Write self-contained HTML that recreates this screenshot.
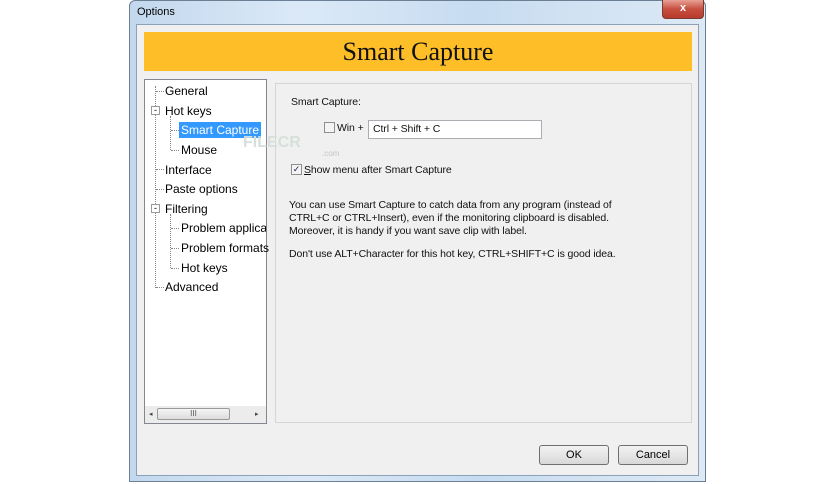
<!DOCTYPE html>
<html><head><style>
body{margin:0;width:836px;height:484px;background:#fff;position:relative;overflow:hidden;font-family:"Liberation Sans",sans-serif;}
.abs{position:absolute}
.win{left:129px;top:0;width:577px;height:482px;background:linear-gradient(90deg,#c3d8ee,#dbe9f7 30%,#c7dcf1 60%,#dde9f5);border:1px solid #6b7f95;border-radius:6px 6px 0 0;box-sizing:border-box}
.client{left:136px;top:24px;width:563px;height:452px;background:#f0f0f0;border:1px solid #8ca0b8;box-sizing:border-box}
.t{font-size:12px;color:#000}
.s{font-size:10.5px;color:#111;font-family:"Liberation Sans",sans-serif;letter-spacing:-0.1px}
.btn{width:70px;height:20px;border:1px solid #707070;border-radius:3px;background:linear-gradient(#f2f2f2,#e6e6e6 50%,#d8d8d8);box-sizing:border-box;text-align:center;line-height:18px;font-size:11px;font-family:"Liberation Sans",sans-serif}
.dl{border-left:1px dotted #888}
.dh{border-top:1px dotted #888}
.cb{width:11px;height:11px;border:1px solid #8f8f8f;background:#f4f4f4;box-sizing:border-box}
</style></head><body>
<div class="abs win"></div>
<div class="abs" style="left:137px;top:6px;font-size:11px;">Options</div>
<div class="abs" style="left:662px;top:0;width:40px;height:18px;background:linear-gradient(#e8a095,#c75040 50%,#b83a2a);border:1px solid #7a3a30;border-top:none;border-radius:0 0 4px 4px;color:#fff;text-align:center;font-size:11px;font-weight:bold;line-height:16px;">x</div>
<div class="abs client"></div>
<div class="abs" style="left:144px;top:32px;width:548px;height:39px;background:#fdbe27;text-align:center;font-family:'Liberation Serif',serif;font-size:26px;line-height:39px;color:#111;">Smart Capture</div>
<div class="abs" style="left:144px;top:79px;width:123px;height:345px;background:#fff;border:1px solid #828790;box-sizing:border-box"></div>
<div class="abs dl" style="left:155px;top:86px;height:202px"></div>
<div class="abs dl" style="left:170px;top:116px;height:34px"></div>
<div class="abs dl" style="left:170px;top:214px;height:54px"></div>
<div class="abs dh" style="left:156px;top:91px;width:8px"></div>
<div class="abs dh" style="left:156px;top:169px;width:8px"></div>
<div class="abs dh" style="left:156px;top:189px;width:8px"></div>
<div class="abs dh" style="left:156px;top:287px;width:8px"></div>
<div class="abs dh" style="left:171px;top:130px;width:8px"></div>
<div class="abs dh" style="left:171px;top:150px;width:8px"></div>
<div class="abs dh" style="left:171px;top:228px;width:8px"></div>
<div class="abs dh" style="left:171px;top:248px;width:8px"></div>
<div class="abs dh" style="left:171px;top:268px;width:8px"></div>
<div class="abs" style="left:151px;top:106px;width:9px;height:9px;border:1px solid #999;background:#fff;box-sizing:border-box;font-size:9px;line-height:6px;text-align:center">-</div>
<div class="abs" style="left:151px;top:204px;width:9px;height:9px;border:1px solid #999;background:#fff;box-sizing:border-box;font-size:9px;line-height:6px;text-align:center">-</div>
<div class="abs t" style="left:165px;top:84px">General</div>
<div class="abs t" style="left:165px;top:104px">Hot keys</div>
<div class="abs t" style="left:179px;top:122px;background:#3399ff;color:#fff;padding:1px 2px;">Smart Capture</div>
<div class="abs t" style="left:181px;top:143px">Mouse</div>
<div class="abs t" style="left:165px;top:163px">Interface</div>
<div class="abs t" style="left:165px;top:182px">Paste options</div>
<div class="abs t" style="left:165px;top:202px">Filtering</div>
<div class="abs t" style="left:181px;top:221px;width:85px;overflow:hidden;white-space:nowrap">Problem applications</div>
<div class="abs t" style="left:181px;top:241px">Problem formats</div>
<div class="abs t" style="left:181px;top:261px">Hot keys</div>
<div class="abs t" style="left:165px;top:280px">Advanced</div>
<div class="abs" style="left:145px;top:406px;width:121px;height:17px;background:#ececec"></div>
<div class="abs" style="left:157px;top:408px;width:73px;height:12px;border:1px solid #9a9a9a;border-radius:2px;background:linear-gradient(#f5f5f5,#dcdcdc);box-sizing:border-box;font-size:8px;text-align:center;line-height:10px;color:#555">III</div>
<div class="abs" style="left:149px;top:410px;font-size:7px;color:#444">◂</div>
<div class="abs" style="left:255px;top:410px;font-size:7px;color:#444">▸</div>
<div class="abs" style="left:275px;top:83px;width:417px;height:340px;border:1px solid #d5d5d5;box-sizing:border-box;background:#f0f0f0"></div>
<div class="abs s" style="left:291px;top:96px">Smart Capture:</div>
<div class="abs cb" style="left:324px;top:122px"></div>
<div class="abs s" style="left:337px;top:122px">Win +</div>
<div class="abs" style="left:368px;top:120px;width:174px;height:19px;background:#fff;border:1px solid #abadb3;box-sizing:border-box"></div>
<div class="abs s" style="left:373px;top:123px">Ctrl + Shift + C</div>
<div class="abs" style="left:243px;top:134px;font-size:16px;color:#d6dfd8;font-weight:bold;">FILECR</div>
<div class="abs" style="left:322px;top:149px;font-size:8px;color:#c4c4c4">.com</div>
<div class="abs cb" style="left:291px;top:164px;font-size:9px;line-height:9px;text-align:center;color:#224">✓</div>
<div class="abs s" style="left:304px;top:164px"><u>S</u>how menu after Smart Capture</div>
<div class="abs s" style="left:289px;top:199px;line-height:13px">You can use Smart Capture to catch data from any program (instead of<br>CTRL+C or CTRL+Insert), even if the monitoring clipboard is disabled.<br>Moreover, it is handy if you want save clip with label.</div>
<div class="abs s" style="left:289px;top:248px">Don't use ALT+Character for this hot key, CTRL+SHIFT+C is good idea.</div>
<div class="abs btn" style="left:539px;top:445px">OK</div>
<div class="abs btn" style="left:618px;top:445px">Cancel</div>
</body></html>
